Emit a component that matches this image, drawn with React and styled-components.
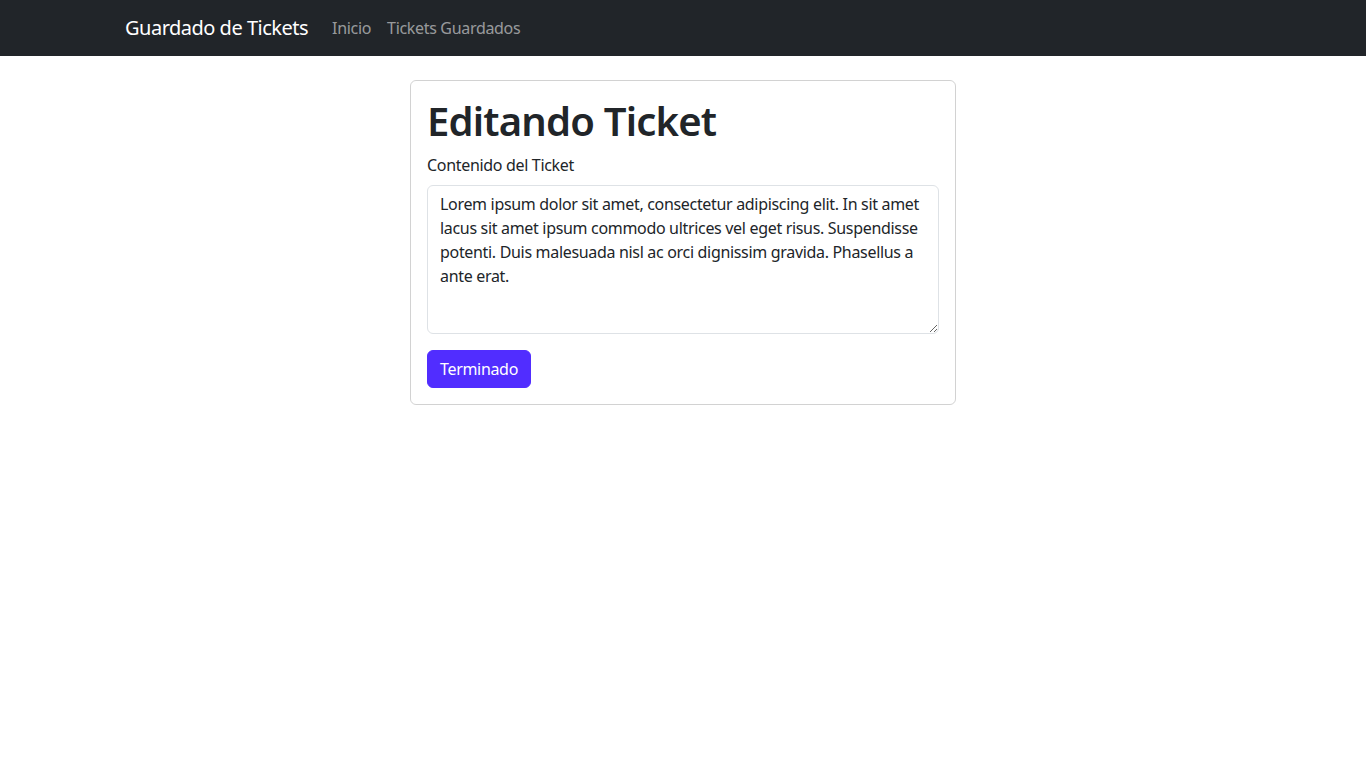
import React from 'react'
import styled, { createGlobalStyle } from 'styled-components'

const GlobalStyle = createGlobalStyle`
  * { box-sizing: border-box; }
  body {
    margin: 0;
    font-family: "Noto Sans", "Open Sans", sans-serif;
    font-size: 16px;
    line-height: 1.5;
    letter-spacing: -0.02em;
    color: #212529;
    background: #fff;
  }
`

const Navbar = styled.nav`
  background: #212529;
  height: 56px;
`

const Container = styled.div`
  width: 1140px;
  margin: 0 auto;
  padding: 0 12px;
`

const NavInner = styled(Container)`
  display: flex;
  align-items: center;
  height: 100%;
`

const Brand = styled.a`
  color: #fff;
  font-size: 20px;
  line-height: 30px;
  margin-right: 16px;
  letter-spacing: -0.025em;
  text-decoration: none;
`

const NavLink = styled.a`
  color: rgba(255, 255, 255, 0.55);
  padding: 8px;
  text-decoration: none;
`

const Row = styled(Container)`
  display: grid;
  grid-template-columns: repeat(12, 1fr);
  column-gap: 24px;
  padding-top: 24px;
`

const Card = styled.div`
  grid-column: 4 / span 6;
  border: 1px solid rgba(0, 0, 0, 0.175);
  border-radius: 6px;
  padding: 16px;
`

const Title = styled.h1`
  margin: 0 0 8px;
  font-size: 40px;
  font-weight: 600;
  line-height: 1.2;
  letter-spacing: -0.02em;
`

const Label = styled.label`
  display: block;
  margin-bottom: 8px;
`

const TextArea = styled.textarea`
  display: block;
  width: 100%;
  height: 149px;
  margin-bottom: 16px;
  padding: 6px 12px;
  font: inherit;
  letter-spacing: inherit;
  color: #212529;
  border: 1px solid #dee2e6;
  border-radius: 6px;
  resize: vertical;
`

const Button = styled.button`
  font: inherit;
  letter-spacing: inherit;
  color: #fff;
  background: #512dff;
  border: 1px solid #512dff;
  border-radius: 6px;
  padding: 6px 12px;
`

export default function App() {
  return (
    <>
      <GlobalStyle />
      <Navbar>
        <NavInner>
          <Brand href="#">Guardado de Tickets</Brand>
          <NavLink href="#">Inicio</NavLink>
          <NavLink href="#">Tickets Guardados</NavLink>
        </NavInner>
      </Navbar>
      <Row>
        <Card>
          <Title>Editando Ticket</Title>
          <Label>Contenido del Ticket</Label>
          <TextArea
            defaultValue="Lorem ipsum dolor sit amet, consectetur adipiscing elit. In sit amet lacus sit amet ipsum commodo ultrices vel eget risus. Suspendisse potenti. Duis malesuada nisl ac orci dignissim gravida. Phasellus a ante erat."
          />
          <Button>Terminado</Button>
        </Card>
      </Row>
    </>
  )
}
